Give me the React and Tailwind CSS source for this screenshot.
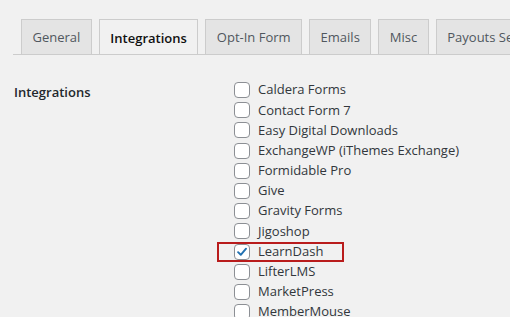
import { useState } from "react";

const TABS = ["General", "Integrations", "Opt-In Form", "Emails", "Misc", "Payouts Service"];

const INTEGRATIONS = [
  "Caldera Forms",
  "Contact Form 7",
  "Easy Digital Downloads",
  "ExchangeWP (iThemes Exchange)",
  "Formidable Pro",
  "Give",
  "Gravity Forms",
  "Jigoshop",
  "LearnDash",
  "LifterLMS",
  "MarketPress",
  "MemberMouse",
];

function Checkbox({ checked }) {
  return (
    <span className="w-4 h-4 shrink-0 rounded-[4px] border border-[#8c8f94] bg-white flex items-center justify-center">
      {checked && (
        <svg viewBox="0 0 16 16" className="w-[14px] h-[14px]">
          <path d="M3.5 8.2 L6.6 11.2 L12.6 4.2" fill="none" stroke="#2271b1" strokeWidth="2.2" strokeLinecap="round" strokeLinejoin="round" />
        </svg>
      )}
    </span>
  );
}

export default function App() {
  const [active] = useState("Integrations");
  const [checked] = useState(["LearnDash"]);

  return (
    <div className="w-[510px] h-[317px] overflow-hidden bg-[#f1f1f1] text-[#32373c]" style={{ fontFamily: '"Open Sans", "Noto Sans", sans-serif' }}>
      {/* tabs */}
      <div className="pt-[19px] ml-[13px] border-b border-[#cccccc] flex pl-[8px] gap-[7px] whitespace-nowrap overflow-hidden">
        {TABS.map((t) =>
          t === active ? (
            <div key={t} className="h-[36px] -mb-px px-[10.5px] pt-[2px] shrink-0 flex items-center border border-b-0 border-[#cccccc] bg-[#f1f1f1] text-[13px] font-semibold text-[#111]">
              {t}
            </div>
          ) : (
            <div key={t} className="h-[35px] px-[10.5px] pt-[2px] shrink-0 flex items-center border border-b-0 border-[#cccccc] bg-[#e4e4e4] text-[13px] text-[#50575e]">
              {t}
            </div>
          )
        )}
      </div>

      {/* settings row */}
      <div className="flex pt-[25px]">
        <div className="w-[234px] pl-[14px] pt-[2px] text-[13px] font-semibold text-[#23282d] leading-[20px]">
          Integrations
        </div>
        <div className="flex flex-col">
          {INTEGRATIONS.map((name) => {
            const on = checked.includes(name);
            return (
              <div key={name} className="relative h-[20.2px] flex items-center gap-[8px] text-[13px] whitespace-nowrap">
                {on && (
                  <span className="absolute left-[-17px] top-[0px] w-[127px] h-[20px] border-[2.5px] border-[#b91c1c]" />
                )}
                <Checkbox checked={on} />
                <span>{name}</span>
              </div>
            );
          })}
        </div>
      </div>
    </div>
  );
}
